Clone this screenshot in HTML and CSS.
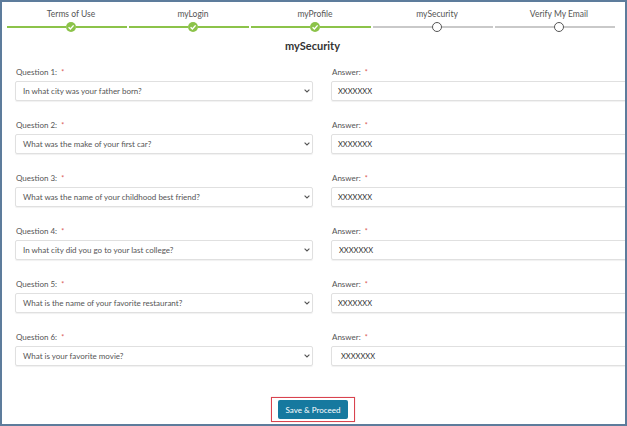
FILE: index.html
```html
<!DOCTYPE html>
<html>
<head>
<meta charset="utf-8">
<link rel="stylesheet" href="styles.css">
</head>
<body>
<div class="frame">
  <div class="stepper">
    <div class="step done">
      <div class="step-label">Terms of Use</div>
      <div class="track"><span class="line-l"></span><span class="dot"><svg viewBox="0 0 10 10" width="10" height="10"><polyline points="2.6,5.2 4.4,7 7.6,3.4" fill="none" stroke="#fff" stroke-width="1.4"/></svg></span><span class="line-r"></span></div>
    </div>
    <div class="step done">
      <div class="step-label">myLogin</div>
      <div class="track"><span class="line-l"></span><span class="dot"><svg viewBox="0 0 10 10" width="10" height="10"><polyline points="2.6,5.2 4.4,7 7.6,3.4" fill="none" stroke="#fff" stroke-width="1.4"/></svg></span><span class="line-r"></span></div>
    </div>
    <div class="step done">
      <div class="step-label">myProfile</div>
      <div class="track"><span class="line-l"></span><span class="dot"><svg viewBox="0 0 10 10" width="10" height="10"><polyline points="2.6,5.2 4.4,7 7.6,3.4" fill="none" stroke="#fff" stroke-width="1.4"/></svg></span><span class="line-r"></span></div>
    </div>
    <div class="step">
      <div class="step-label">mySecurity</div>
      <div class="track"><span class="line-l"></span><span class="dot"></span><span class="line-r"></span></div>
    </div>
    <div class="step">
      <div class="step-label">Verify My Email</div>
      <div class="track"><span class="line-l"></span><span class="dot"></span><span class="line-r"></span></div>
    </div>
  </div>

  <h1 class="title">mySecurity</h1>

  <div class="form">
    <div class="row">
      <div class="field">
        <div class="label">Question 1: <span class="req">*</span></div>
        <div class="select"><span>In what city was your father born?</span><svg class="chev" viewBox="0 0 6 4" width="6" height="4"><polyline points="0.6,0.6 3,3 5.4,0.6" fill="none" stroke="#555" stroke-width="1.1"/></svg></div>
      </div>
      <div class="field">
        <div class="label">Answer: <span class="req">*</span></div>
        <div class="input">XXXXXXX</div>
      </div>
    </div>
    <div class="row">
      <div class="field">
        <div class="label">Question 2: <span class="req">*</span></div>
        <div class="select"><span>What was the make of your first car?</span><svg class="chev" viewBox="0 0 6 4" width="6" height="4"><polyline points="0.6,0.6 3,3 5.4,0.6" fill="none" stroke="#555" stroke-width="1.1"/></svg></div>
      </div>
      <div class="field">
        <div class="label">Answer: <span class="req">*</span></div>
        <div class="input">XXXXXXX</div>
      </div>
    </div>
    <div class="row">
      <div class="field">
        <div class="label">Question 3: <span class="req">*</span></div>
        <div class="select"><span>What was the name of your childhood best friend?</span><svg class="chev" viewBox="0 0 6 4" width="6" height="4"><polyline points="0.6,0.6 3,3 5.4,0.6" fill="none" stroke="#555" stroke-width="1.1"/></svg></div>
      </div>
      <div class="field">
        <div class="label">Answer: <span class="req">*</span></div>
        <div class="input">XXXXXXX</div>
      </div>
    </div>
    <div class="row">
      <div class="field">
        <div class="label">Question 4: <span class="req">*</span></div>
        <div class="select"><span>In what city did you go to your last college?</span><svg class="chev" viewBox="0 0 6 4" width="6" height="4"><polyline points="0.6,0.6 3,3 5.4,0.6" fill="none" stroke="#555" stroke-width="1.1"/></svg></div>
      </div>
      <div class="field">
        <div class="label">Answer: <span class="req">*</span></div>
        <div class="input indent-s">XXXXXXX</div>
      </div>
    </div>
    <div class="row">
      <div class="field">
        <div class="label">Question 5: <span class="req">*</span></div>
        <div class="select"><span>What is the name of your favorite restaurant?</span><svg class="chev" viewBox="0 0 6 4" width="6" height="4"><polyline points="0.6,0.6 3,3 5.4,0.6" fill="none" stroke="#555" stroke-width="1.1"/></svg></div>
      </div>
      <div class="field">
        <div class="label">Answer: <span class="req">*</span></div>
        <div class="input">XXXXXXX</div>
      </div>
    </div>
    <div class="row">
      <div class="field">
        <div class="label">Question 6: <span class="req">*</span></div>
        <div class="select"><span>What is your favorite movie?</span><svg class="chev" viewBox="0 0 6 4" width="6" height="4"><polyline points="0.6,0.6 3,3 5.4,0.6" fill="none" stroke="#555" stroke-width="1.1"/></svg></div>
      </div>
      <div class="field">
        <div class="label">Answer: <span class="req">*</span></div>
        <div class="input indent">XXXXXXX</div>
      </div>
    </div>
  </div>

  <div class="actions">
    <div class="highlight">
      <button class="btn">Save &amp; Proceed</button>
    </div>
  </div>
</div>
</body>
</html>
```

FILE: styles.css
```css
* { box-sizing: border-box; }
html, body { margin: 0; padding: 0; background: #fff; }
body {
  font-family: Lato, "Open Sans", "Liberation Sans", sans-serif;
  color: #555;
}
.frame {
  width: 627px;
  height: 426px;
  border: 2px solid #5d7c9c;
  overflow: hidden;
  padding-top: 6px;
  background: #fff;
}
.stepper {
  display: flex;
  margin-left: 5px;
}
.step {
  width: 122px;
  flex: none;
}
.step-label {
  width: 128px;
  text-align: center;
  font-size: 8.5px;
  line-height: 12px;
  height: 12px;
  color: #555;
  white-space: nowrap;
}
.track {
  display: flex;
  align-items: center;
  height: 10px;
  margin-top: 2px;
}
.line-l, .line-r {
  height: 2px;
  background: #c9c9c9;
}
.line-l { width: 59px; flex: none; }
.line-r { flex: 1; margin-right: 2px; }
.dot {
  width: 10px;
  height: 10px;
  border-radius: 50%;
  flex: none;
  border: 1.3px solid #555;
  background: #fff;
  display: flex;
}
.step.done .line-l, .step.done .line-r { background: #8cc34a; }
.step.done .dot { background: #8cc34a; border: none; }
.title {
  margin: 8px 0 0 0;
  text-align: center;
  font-size: 11px;
  line-height: 12px;
  font-weight: 700;
  color: #333;
  padding-right: 2px;
}
.form {
  margin-top: 14px;
  padding-left: 13px;
  display: flex;
  flex-direction: column;
  gap: 18px;
}
.row {
  display: grid;
  grid-template-columns: 298px 298px;
  column-gap: 18px;
}
.label {
  font-size: 8px;
  line-height: 12px;
  height: 12px;
  color: #555;
  padding-left: 1px;
  margin-bottom: 3px;
}
.req { color: #d9534f; font-size: 7px; margin-left: 2px; }
.select, .input {
  height: 20px;
  border: 1px solid #e0e0e0;
  border-radius: 2px;
  box-shadow: 0 1px 1px rgba(0,0,0,0.06);
  font-size: 8px;
  display: flex;
  align-items: center;
}
.select {
  padding: 0 2px 0 7px;
  justify-content: space-between;
  color: #555;
}
.input {
  padding-left: 6px;
  color: #333;
  font-size: 7.5px;
}
.input.indent-s { padding-left: 7px; }
.input.indent { padding-left: 9px; }
.chev { flex: none; }
.actions {
  display: flex;
  justify-content: center;
  margin-top: 31px;
  padding-right: 1px;
}
.highlight {
  border: 1.5px solid #d9434f;
  padding: 2px 6px;
  box-shadow: 0 0 1px rgba(200,60,60,0.4);
}
.btn {
  display: block;
  width: 70px;
  height: 19px;
  border: none;
  border-radius: 2px;
  background: #16799f;
  color: #fff;
  font-family: Lato, "Open Sans", "Liberation Sans", sans-serif;
  font-size: 8px;
  padding: 0;
}
```
